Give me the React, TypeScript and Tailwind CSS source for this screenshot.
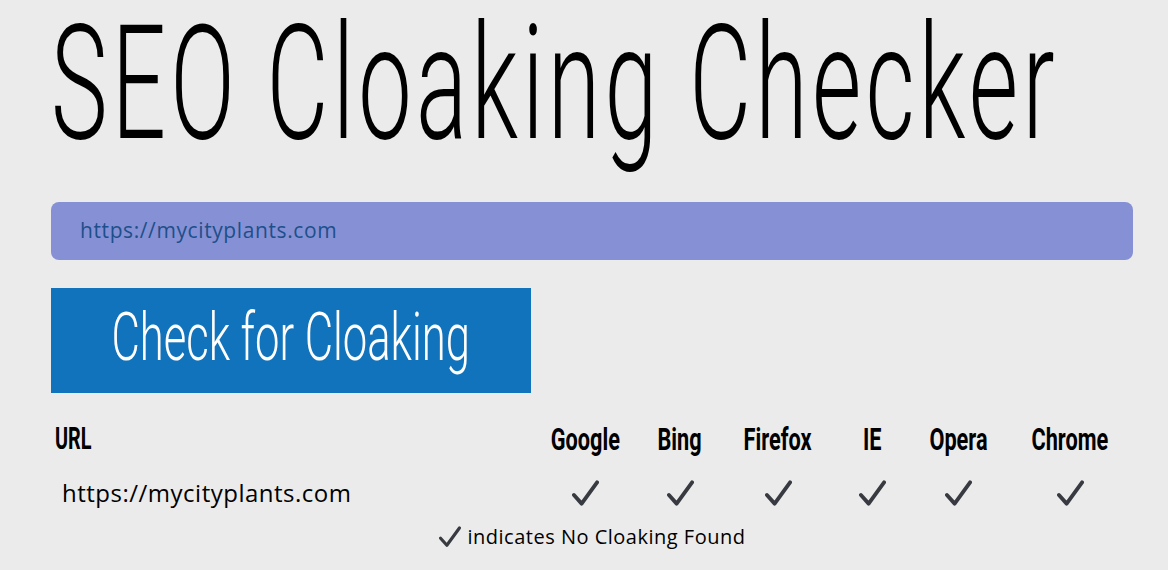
import React from "react";

const Check = ({ className = "" }: { className?: string }) => (
  <svg viewBox="0 0 28 28" className={className} fill="none">
    <path d="M2 15.5 L10 24.5 L26 2.5" stroke="#373a40" strokeWidth="4" strokeLinecap="round" strokeLinejoin="round" />
  </svg>
);

const cols = [
  { name: "Google", w: "w-[90px]" },
  { name: "Bing", w: "w-[100px]" },
  { name: "Firefox", w: "w-[96px]" },
  { name: "IE", w: "w-[92px]" },
  { name: "Opera", w: "w-[80px]" },
  { name: "Chrome", w: "w-[144px]" },
];

export default function App() {
  return (
    <div className="w-[1168px] h-[570px] bg-[#ebebeb] overflow-hidden relative font-['Open_Sans',sans-serif]">
      <div className="pl-[51px] pr-[35px]">
        <div className="h-[190px] pt-[4px]">
          <span className="inline-block origin-left scale-x-[0.6] whitespace-nowrap font-['Roboto',sans-serif] font-light text-[159px] leading-[160px] text-black tracking-[7px]">
            SEO Cloaking Checker
          </span>
        </div>
        <div className="mt-[12px] h-[58px] rounded-[8px] bg-[#8691d5] flex items-center pl-[29px]">
          <span className="text-[21px] tracking-[0.6px] text-[#1d4f8a]">https://mycityplants.com</span>
        </div>
        <div className="mt-[28px] w-[480px] h-[105px] bg-[#1173bb] flex items-center justify-center">
          <span className="inline-block scale-x-[0.65] whitespace-nowrap font-['Roboto',sans-serif] font-light text-[67px] leading-none text-white pb-[6px]">
            Check for Cloaking
          </span>
        </div>
        <div className="mt-[28px] flex items-center h-[36px]">
          <div className="w-[489px] shrink-0 pl-[4px]">
            <span className="inline-block origin-left scale-x-[0.64] font-['Roboto',sans-serif] font-bold text-[31px] leading-none text-black">URL</span>
          </div>
          {cols.map((c) => (
            <div key={c.name} className={`${c.w} shrink-0 flex justify-center`}>
              <span className="inline-block scale-x-[0.7] whitespace-nowrap font-['Roboto',sans-serif] font-bold text-[31px] leading-none text-black">
                {c.name}
              </span>
            </div>
          ))}
        </div>
        <div className="mt-[18px] flex items-center h-[36px]">
          <div className="w-[489px] shrink-0 pl-[11px] text-[24px] tracking-[0.5px] text-black">https://mycityplants.com</div>
          {cols.map((c) => (
            <div key={c.name} className={`${c.w} shrink-0 flex justify-center`}>
              <Check className="w-[27px] h-[27px]" />
            </div>
          ))}
        </div>
        <div className="mt-[11px] flex items-center justify-center h-[30px]">
          <Check className="w-[22px] h-[22px] mr-[7px]" />
          <span className="text-[20px] tracking-[0.5px] text-black">indicates No Cloaking Found</span>
        </div>
      </div>
    </div>
  );
}
